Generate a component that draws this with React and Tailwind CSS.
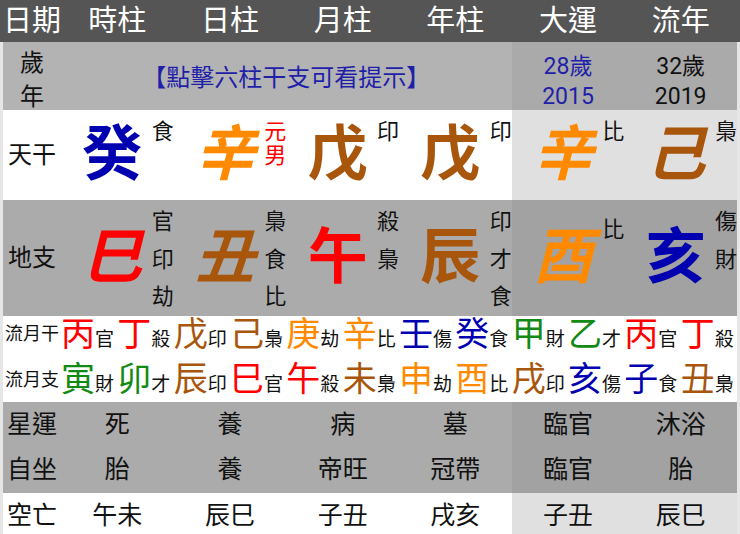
const RED = "text-[#ff0000]";
const ORANGE = "text-[#ff8a00]";
const BROWN = "text-[#a8560c]";
const BLUE = "text-[#0000b0]";
const GREEN = "text-[#138a13]";

const GRID = "grid grid-cols-[58px_repeat(6,minmax(0,1fr))]";

const heads = ["時柱", "日柱", "月柱", "年柱", "大運", "流年"];

// slanted chars lean like in the app's font
const tiangan = [
  { c: "癸", color: BLUE, s: ["食"] },
  { c: "辛", color: ORANGE, s: ["元", "男"], sColor: RED, slant: true },
  { c: "戊", color: BROWN, s: ["印"] },
  { c: "戊", color: BROWN, s: ["印"] },
  { c: "辛", color: ORANGE, s: ["比"], slant: true },
  { c: "己", color: BROWN, s: ["梟"], slant: true },
];

const dizhi = [
  { c: "巳", color: RED, s: ["官", "印", "劫"], slant: true },
  { c: "丑", color: BROWN, s: ["梟", "食", "比"], slant: true },
  { c: "午", color: RED, s: ["殺", "梟"] },
  { c: "辰", color: BROWN, s: ["印", "才", "食"] },
  { c: "酉", color: ORANGE, s: ["比"], low: true, slant: true },
  { c: "亥", color: BLUE, s: ["傷", "財"] },
];

const monthGan = [
  ["丙", RED, "官"], ["丁", RED, "殺"], ["戊", BROWN, "印"], ["己", BROWN, "梟"],
  ["庚", ORANGE, "劫"], ["辛", ORANGE, "比"], ["壬", BLUE, "傷"], ["癸", BLUE, "食"],
  ["甲", GREEN, "財"], ["乙", GREEN, "才"], ["丙", RED, "官"], ["丁", RED, "殺"],
];

const monthZhi = [
  ["寅", GREEN, "財"], ["卯", GREEN, "才"], ["辰", BROWN, "印"], ["巳", RED, "官"],
  ["午", RED, "殺"], ["未", BROWN, "梟"], ["申", ORANGE, "劫"], ["酉", ORANGE, "比"],
  ["戌", BROWN, "印"], ["亥", BLUE, "傷"], ["子", BLUE, "食"], ["丑", BROWN, "梟"],
];

function PillarCell({ item, bg, lead, pad }) {
  return (
    <div className={`grid grid-cols-[1fr_22px] ${bg}`}>
      <div className="flex items-center justify-center pl-[12px]">
        <span
          className={`text-[60px] font-bold leading-none ${item.slant ? "italic" : ""} ${item.color}`}
        >
          {item.c}
        </span>
      </div>
      <div
        className={`flex flex-col text-[22px] ${lead} ${item.low ? "pt-[11px]" : pad} ${item.sColor || "text-[#111]"}`}
      >
        {item.s.map((t, i) => (
          <span key={i}>{t}</span>
        ))}
      </div>
    </div>
  );
}

function MonthRow({ label, items, h }) {
  return (
    <div className={`grid grid-cols-[58px_repeat(12,minmax(0,1fr))] bg-white ${h}`}>
      <div className="flex items-center justify-center text-[18px] text-[#111]">{label}</div>
      {items.map(([c, color, s], i) => (
        <div key={i} className="flex items-baseline self-center">
          <span className={`text-[34px] leading-none ${color}`}>{c}</span>
          <span className="text-[19px] leading-none text-[#111]">{s}</span>
        </div>
      ))}
    </div>
  );
}

function TextRow({ label, values, h, leftBg, rightBg }) {
  return (
    <div className={`${GRID} ${h} text-[25px] text-[#111]`}>
      <div className={`flex items-center justify-center ${leftBg}`}>{label}</div>
      {values.map((v, i) => (
        <div
          key={i}
          className={`flex items-center justify-center ${i >= 4 ? rightBg : leftBg}`}
        >
          {v}
        </div>
      ))}
    </div>
  );
}

export default function App() {
  return (
    <div className="w-[740px] h-[534px] overflow-hidden bg-[#e6e6e6] font-['Roboto','Noto_Sans_CJK_TC',sans-serif]">

      {/* Header */}

      <div className={`${GRID} h-[42px] bg-[#555555] px-[3px] text-[29px] text-white`}>
        <div className="flex items-center justify-center">日期</div>
        {heads.map((t) => (
          <div key={t} className="flex items-center justify-center">
            {t}
          </div>
        ))}
      </div>

      <div className="mx-[3px]">

        {/* Age row */}

        <div className={`${GRID} h-[68px]`}>
          <div className="flex flex-col items-center justify-center bg-[#b3b3b3] pt-[4px] text-[24px] leading-[34px] text-[#111]">
            <span>歲</span>
            <span>年</span>
          </div>
          <div className="col-span-4 flex items-center justify-center bg-[#b3b3b3] text-[24px] text-[#1f1fa8]">
            【點擊六柱干支可看提示】
          </div>
          <div className="flex flex-col items-center justify-center bg-[#aaaaaa] pt-[8px] text-[23px] leading-[30px] text-[#1f1fa8]">
            <span>28歲</span>
            <span>2015</span>
          </div>
          <div className="flex flex-col items-center justify-center bg-[#aaaaaa] pt-[8px] text-[23px] leading-[30px] text-[#111]">
            <span>32歲</span>
            <span>2019</span>
          </div>
        </div>

        {/* Heavenly stems */}

        <div className={`${GRID} h-[90px]`}>
          <div className="flex items-center justify-center bg-white text-[24px] text-[#111]">天干</div>
          {tiangan.map((it, i) => (
            <PillarCell
              key={i}
              item={it}
              bg={i >= 4 ? "bg-[#e0e0e0]" : "bg-white"}
              lead="leading-[24px]"
              pad="pt-[10px]"
            />
          ))}
        </div>

        {/* Earthly branches */}

        <div className={`${GRID} h-[111px]`}>
          <div className="flex items-center justify-center bg-[#ababab] text-[24px] text-[#111]">地支</div>
          {dizhi.map((it, i) => (
            <PillarCell
              key={i}
              item={it}
              bg={i >= 4 ? "bg-[#a2a2a2]" : "bg-[#ababab]"}
              lead="leading-[37.5px]"
              pad="pt-[3px]"
            />
          ))}
        </div>

        {/* Monthly */}

        <MonthRow label="流月干" items={monthGan} h="h-[45px]" />
        <MonthRow label="流月支" items={monthZhi} h="h-[46px]" />

        {/* Life stages */}

        <TextRow
          label="星運"
          values={["死", "養", "病", "墓", "臨官", "沐浴"]}
          h="h-[45px]"
          leftBg="bg-[#ababab]"
          rightBg="bg-[#a2a2a2]"
        />
        <TextRow
          label="自坐"
          values={["胎", "養", "帝旺", "冠帶", "臨官", "胎"]}
          h="h-[46px]"
          leftBg="bg-[#ababab]"
          rightBg="bg-[#a2a2a2]"
        />
        <TextRow
          label="空亡"
          values={["午未", "辰巳", "子丑", "戌亥", "子丑", "辰巳"]}
          h="h-[45px]"
          leftBg="bg-white"
          rightBg="bg-[#e0e0e0]"
        />

      </div>
    </div>
  );
}
